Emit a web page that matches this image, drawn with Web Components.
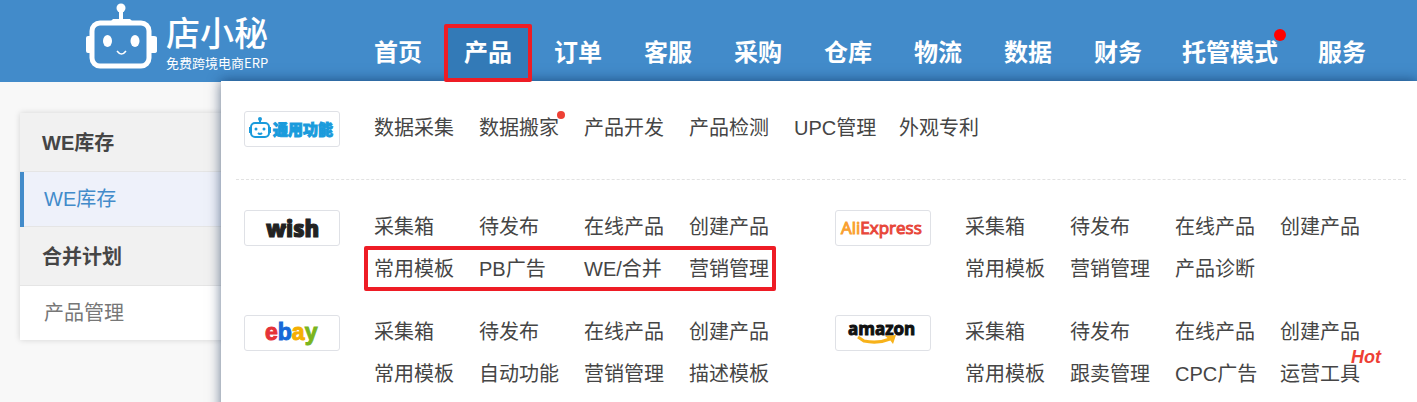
<!DOCTYPE html>
<html lang="zh-CN">
<head>
<meta charset="utf-8">
<meta name="viewport" content="width=device-width, initial-scale=1">
<title>店小秘</title>
<style>
  html, body { height: 100%; }
  body {
    margin: 0;
    overflow: hidden;
    background: #f8f8f8;
    color: #454545;
    font: 20px/34px "Liberation Sans", "Noto Sans CJK SC", sans-serif;
  }
</style>
</head>
<body>
<erp-app>
  <erp-header slot="header">
    <nav-item>首页</nav-item>
    <nav-item active>产品</nav-item>
    <nav-item>订单</nav-item>
    <nav-item>客服</nav-item>
    <nav-item>采购</nav-item>
    <nav-item>仓库</nav-item>
    <nav-item>物流</nav-item>
    <nav-item>数据</nav-item>
    <nav-item>财务</nav-item>
    <nav-item dot>托管模式</nav-item>
    <nav-item>服务</nav-item>
  </erp-header>

  <side-menu slot="side">
    <side-group label="WE库存"><side-link active>WE库存</side-link></side-group>
    <side-group label="合并计划"><side-link>产品管理</side-link></side-group>
  </side-menu>

  <mega-menu slot="menu">
    <platform-block slot="common" brand="common">
      <menu-link>数据采集</menu-link>
      <menu-link dot>数据搬家</menu-link>
      <menu-link>产品开发</menu-link>
      <menu-link>产品检测</menu-link>
      <menu-link>UPC管理</menu-link>
      <menu-link>外观专利</menu-link>
    </platform-block>
    <platform-block brand="wish" cols="4" marked>
      <menu-link>采集箱</menu-link>
      <menu-link>待发布</menu-link>
      <menu-link>在线产品</menu-link>
      <menu-link>创建产品</menu-link>
      <menu-link>常用模板</menu-link>
      <menu-link>PB广告</menu-link>
      <menu-link>WE/合并</menu-link>
      <menu-link>营销管理</menu-link>
    </platform-block>
    <platform-block brand="aliexpress" cols="4">
      <menu-link>采集箱</menu-link>
      <menu-link>待发布</menu-link>
      <menu-link>在线产品</menu-link>
      <menu-link>创建产品</menu-link>
      <menu-link>常用模板</menu-link>
      <menu-link>营销管理</menu-link>
      <menu-link>产品诊断</menu-link>
    </platform-block>
    <platform-block brand="ebay" cols="4">
      <menu-link>采集箱</menu-link>
      <menu-link>待发布</menu-link>
      <menu-link>在线产品</menu-link>
      <menu-link>创建产品</menu-link>
      <menu-link>常用模板</menu-link>
      <menu-link>自动功能</menu-link>
      <menu-link>营销管理</menu-link>
      <menu-link>描述模板</menu-link>
    </platform-block>
    <platform-block brand="amazon" cols="4">
      <menu-link>采集箱</menu-link>
      <menu-link>待发布</menu-link>
      <menu-link>在线产品</menu-link>
      <menu-link>创建产品</menu-link>
      <menu-link>常用模板</menu-link>
      <menu-link>跟卖管理</menu-link>
      <menu-link>CPC广告</menu-link>
      <menu-link tag="Hot">运营工具</menu-link>
    </platform-block>
  </mega-menu>
</erp-app>

<script>
(function() {
  class BaseElement extends HTMLElement {
    constructor() {
      super();
      this.attachShadow({ mode: 'open' });
    }

    connectedCallback() {
      this.shadowRoot.innerHTML = this.render();
    }
  }

  class ErpApp extends BaseElement {
    render() {
      return `
        <style>
          :host { display: block; position: relative; min-height: 100vh; }
          main { padding: 31px 20px; }
          /* the open menu lies over the page and the header's last pixel */
          .overlay {
            position: absolute;
            top: 81px;
            left: 221px;
            right: 0;
            min-height: calc(100vh - 81px);
            display: grid;
          }
        </style>
        <slot name="header"></slot>
        <main><slot name="side"></slot></main>
        <div class="overlay"><slot name="menu"></slot></div>
      `;
    }
  }

  class ErpHeader extends BaseElement {
    render() {
      return `
        <style>
          :host { display: block; background: #428bca; color: #fff; }
          header { display: flex; height: 82px; }
          .logo {
            flex: none;
            box-sizing: border-box;
            width: 354px;
            padding: 3px 0 0 84px;
            display: flex;
            gap: 8px;
            color: inherit;
            text-decoration: none;
          }
          .logo svg { display: block; flex: none; }
          .words { display: flex; flex-direction: column; padding-top: 12px; white-space: nowrap; }
          .name { font-size: 34px; font-weight: 500; line-height: 38px; }
          .sub { font-family: "Noto Sans CJK SC", sans-serif; font-size: 13px; line-height: 20px; }
          nav { display: flex; gap: 2px; align-items: flex-end; }
        </style>
        <header>
          <a class="logo" href="#">
            <svg width="74" height="68" viewBox="0 0 74 68" aria-hidden="true">
              <circle cx="37" cy="5" r="4.500" fill="#fff"/>
              <path d="M35 8h4v9h-4zM29 16h17l3 3H26z" fill="#fff"/>
              <rect x="8" y="20" width="57" height="43" rx="8" fill="none" stroke="#fff" stroke-width="5"/>
              <path d="M6 33H4q-2 0-2 2v13q0 2 2 2h2zM67 33h3q3 0 3 2v13q0 2-3 2h-3z" fill="#fff"/>
              <ellipse cx="23.500" cy="38" rx="4.500" ry="6" fill="#fff"/>
              <ellipse cx="51" cy="38" rx="4.500" ry="6" fill="#fff"/>
              <path d="M33 48q4.500 6 9 0" fill="none" stroke="#fff" stroke-width="1.500"/>
            </svg>
            <span class="words">
              <span class="name">店小秘</span>
              <span class="sub">免费跨境电商ERP</span>
            </span>
          </a>
          <nav><slot></slot></nav>
        </header>
      `;
    }
  }

  class NavItem extends BaseElement {
    render() {
      return `
        <style>
          :host { display: block; flex: none; }
          a {
            position: relative;
            box-sizing: border-box;
            display: block;
            min-width: 88px;
            height: 58px;
            padding: 0 18px;
            color: #fff;
            font-size: 24px;
            font-weight: bold;
            line-height: 58px;
            text-align: center;
            text-decoration: none;
            white-space: nowrap;
          }
          :host([active]) { position: relative; z-index: 2; }
          :host([active]) a {
            padding: 0;
            border: 4px solid #ee1c25;
            border-radius: 2px;
            background: #337ab7;
            line-height: 50px;
          }
          .dot {
            position: absolute;
            top: 5px;
            right: 10px;
            width: 12px;
            height: 12px;
            border-radius: 50%;
            background: #f00;
          }
        </style>
        <a href="#"><slot></slot>${this.hasAttribute('dot') ? '<span class="dot"></span>' : ''}</a>
      `;
    }
  }

  class SideMenu extends BaseElement {
    render() {
      return `
        <style>
          :host {
            display: block;
            width: 260px;
            background: #fff;
            box-shadow: 0 0 6px rgba(0, 0, 0, 0.15);
          }
        </style>
        <slot></slot>
      `;
    }
  }

  class SideGroup extends BaseElement {
    render() {
      return `
        <style>
          :host { display: block; }
          h3 {
            margin: 0;
            padding: 2px 22px 0;
            border-bottom: 1px solid #e5e5e5;
            background: #f1f1f1;
            font-size: 20px;
            line-height: 56px;
          }
        </style>
        <h3>${this.getAttribute('label')}</h3>
        <slot></slot>
      `;
    }
  }

  class SideLink extends BaseElement {
    render() {
      return `
        <style>
          :host { display: block; }
          a {
            display: block;
            padding: 0 20px;
            border-left: 4px solid transparent;
            color: #777;
            line-height: 54px;
            text-decoration: none;
          }
          :host([active]) a {
            background: #eef1fa;
            border-left-color: #428bca;
            box-shadow: inset 0 -1px #e5e5e5;
            color: #428bca;
            padding-bottom: 1px;
          }
        </style>
        <a href="#"><slot></slot></a>
      `;
    }
  }

  class MegaMenu extends BaseElement {
    render() {
      return `
        <style>
          :host {
            display: block;
            padding: 30px 11px 0 15px;
            background: #fff;
            box-shadow: 0 0 12px rgba(0, 30, 70, 0.6);
          }
          .common { padding: 0 0 32px 8px; border-bottom: 1px dashed #e2e2e2; }
          .platforms {
            display: grid;
            grid-template-columns: 1fr 1fr;
            gap: 29px 20px;
            padding: 30px 0 30px 8px;
          }
        </style>
        <section class="common"><slot name="common"></slot></section>
        <section class="platforms"><slot></slot></section>
      `;
    }
  }

  const robot = `
    <g fill="none" stroke="#1a9bdc" stroke-width="2">
      <rect x="6" y="11" width="18" height="14" rx="4"/>
      <path d="M15 7v4M5 15v6M25 15v6M13 21q2 2 4 0"/>
    </g>
    <g fill="#1a9bdc"><circle cx="15" cy="7" r="2"/><circle cx="11" cy="17" r="1.500"/><circle cx="19" cy="17" r="1.500"/></g>`;

  const brands = {
    common: robot + `
      <text x="28" y="23" font-size="15" font-weight="900" font-family="Noto Sans CJK SC" fill="#1a9bdc" stroke="#1a9bdc">通用功能</text>`,
    wish: `
      <text x="21" y="26" font-size="22" font-weight="900" font-family="Noto Sans" fill="#222" stroke="#222">wish</text>
      <path d="M39 13l3 3-3 3-3-3z" fill="#222"/>`,
    aliexpress: `
      <text x="5" y="23" font-size="17" font-family="Open Sans" stroke-width="1"><tspan fill="#f9a030" stroke="#f9a030">Ali</tspan><tspan fill="#e8473b" stroke="#e8473b">Express</tspan></text>`,
    ebay: `
      <text x="20" y="24" font-size="23" font-weight="bold" stroke-width="1"><tspan fill="#e53238" stroke="#e53238">e</tspan><tspan fill="#1769d8" stroke="#1769d8">b</tspan><tspan fill="#f5af02" stroke="#f5af02">a</tspan><tspan fill="#7ab51d" stroke="#7ab51d">y</tspan></text>`,
    amazon: `
      <text x="12" y="19" font-size="17" font-weight="bold" font-family="Open Sans" fill="#111" stroke="#111">amazon</text>
      <path d="M22 21l6 4q14 3 26-2" fill="none" stroke="#f7b21a" stroke-width="3"/>
      <path d="M49 20l11-1-3 9-3-4z" fill="#f7b21a"/>`
  };

  class PlatformBlock extends BaseElement {
    render() {
      const brand = this.getAttribute('brand');
      const cols = this.getAttribute('cols') || 6;
      return `
        <style>
          :host { display: flex; align-items: flex-start; gap: 34px; }
          .logo {
            flex: none;
            box-sizing: border-box;
            width: 96px;
            height: 36px;
            border: 1px solid #dfe1e6;
            border-radius: 3px;
          }
          .logo svg { display: block; overflow: visible; }
          .links {
            position: relative;
            display: grid;
            grid-template-columns: repeat(${cols}, 105px);
            gap: 8px 0;
          }
          :host([brand="common"]) { height: 36px; }
          /* red frame round the second row of links */
          .frame {
            position: absolute;
            top: 36px;
            left: -10px;
            right: 18px;
            height: 37px;
            border: 4px solid #ee1c25;
            border-radius: 2px;
            pointer-events: none;
          }
        </style>
        <a class="logo" href="#" aria-label="${brand}">
          <svg width="94" height="34" viewBox="0 0 94 34">${brands[brand]}</svg>
        </a>
        <div class="links">
          <slot></slot>
          ${this.hasAttribute('marked') ? '<span class="frame"></span>' : ''}
        </div>
      `;
    }
  }

  class MenuLink extends BaseElement {
    render() {
      const tag = this.getAttribute('tag');
      return `
        <style>
          :host { display: block; white-space: nowrap; }
          a { position: relative; display: inline-block; color: #454545; text-decoration: none; }
          .dot {
            position: absolute;
            top: 0;
            right: -6px;
            width: 8px;
            height: 8px;
            border-radius: 50%;
            background: #ee4035;
          }
          .tag {
            position: absolute;
            top: -10px;
            right: -21px;
            color: #ee4035;
            font-size: 18px;
            font-style: italic;
            font-weight: bold;
            line-height: 20px;
          }
        </style>
        <a href="#"><slot></slot>${this.hasAttribute('dot') ? '<span class="dot"></span>' : ''}${tag ? `<span class="tag">${tag}</span>` : ''}</a>
      `;
    }
  }

  customElements.define('erp-app', ErpApp);
  customElements.define('erp-header', ErpHeader);
  customElements.define('nav-item', NavItem);
  customElements.define('side-menu', SideMenu);
  customElements.define('side-group', SideGroup);
  customElements.define('side-link', SideLink);
  customElements.define('mega-menu', MegaMenu);
  customElements.define('platform-block', PlatformBlock);
  customElements.define('menu-link', MenuLink);
})();
</script>
</body>
</html>
